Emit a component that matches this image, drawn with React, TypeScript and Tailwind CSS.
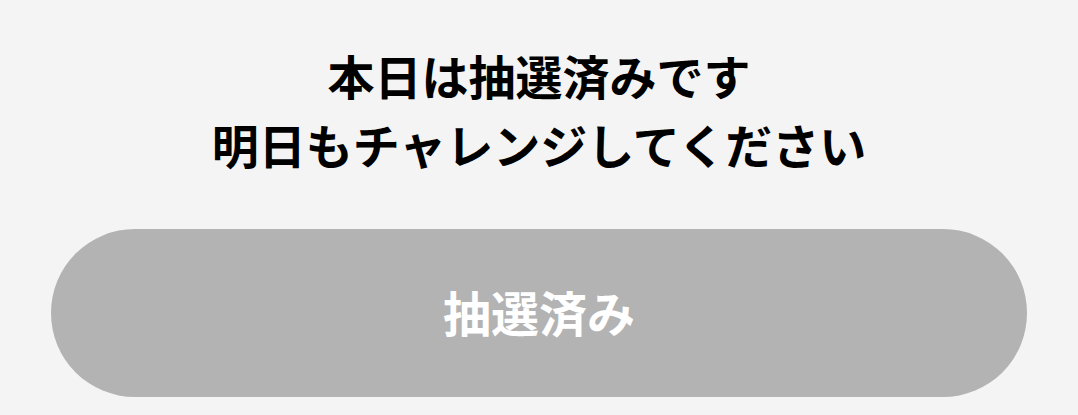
export default function App() {
  return (
    <div
      className="min-h-[415px] bg-[#f4f4f4] px-[51px] pt-[40px]"
      style={{ fontFamily: '"Noto Sans CJK JP", "Noto Sans", sans-serif' }}
    >
      <p className="text-center text-[47px] font-bold leading-[69px] text-black">
        本日は抽選済みです
        <br />
        明日もチャレンジしてください
      </p>
      <button
        type="button"
        disabled
        className="mt-[51px] flex h-[168px] w-full items-center justify-center rounded-full bg-[#b3b3b3] pb-1 text-[48px] font-bold text-white"
      >
        抽選済み
      </button>
    </div>
  );
}
